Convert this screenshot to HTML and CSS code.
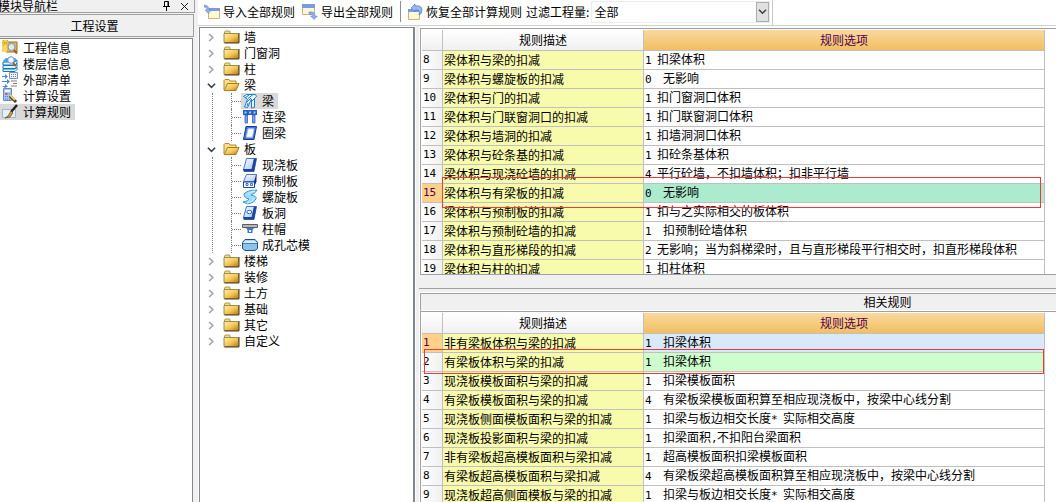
FILE: index.html
```html
<!DOCTYPE html>
<html lang="zh-CN">
<head>
<meta charset="utf-8">
<title>计算规则</title>
<link rel="stylesheet" href="styles.css">
</head>
<body>
<svg class="defs" aria-hidden="true">
  <defs>
    <linearGradient id="gold" x1="0" y1="0" x2="1" y2="1"><stop offset="0" stop-color="#fff0a8"/><stop offset=".55" stop-color="#f2c552"/><stop offset="1" stop-color="#b8780c"/></linearGradient>
    <linearGradient id="blue" x1="0" y1="0" x2="1" y2="1"><stop offset="0" stop-color="#ffffff"/><stop offset="1" stop-color="#a9c8f2"/></linearGradient>
    <symbol id="folder" viewBox="0 0 16 14"><path d="M1 3V2l1-1h4l1 2" fill="#f3dc8c" stroke="#a89468"/><path d="M.5 3.5h14.500v9H.5z" fill="url(#gold)" stroke="#a08a50"/><path d="M15.500 3v10H1" fill="none" stroke="#4a3820"/></symbol>
    <symbol id="folder-open" viewBox="0 0 16 14"><path d="M.5 12V2.500l1-1h4l1 1.500h6v3" fill="#f8df88" stroke="#b18a32"/><path d="M.8 12.500L4 5.500h11.500l-3 7z" fill="url(#gold)" stroke="#a77c22"/></symbol>
    <symbol id="right" viewBox="0 0 8 10"><path d="M1.500 1l4 4-4 4" fill="none" stroke="#a0a0a0" stroke-width="1.600"/></symbol>
    <symbol id="down" viewBox="0 0 10 8"><path d="M1 2l4 4 4-4" fill="none" stroke="#404040" stroke-width="1.800"/></symbol>
    <symbol id="beam" viewBox="0 0 16 16"><path d="M1.500 3.500l3-2h9l1 2-2 2v9l-3 .5V6l-4 8.500-3-.5 3-8z" fill="#e5f4ff" stroke="#2380cf"/><path d="M3 5l4-3M6 5.500l5-4M5 9l4-4M5 13l1-3M10 8l3-3" stroke="#2380cf" fill="none"/></symbol>
    <symbol id="link-beam" viewBox="0 0 16 16"><path d="M1 1h14v5H1z" fill="#2a5ccc"/><path d="M2.500 2.500h2v2h-2zM7 2.500h2v2H7zM11.500 2.500h2v2h-2z" fill="#a9c8fa"/><path d="M3 6h2.500v8H3zM10.500 6H13v8h-2.500z" fill="#79a6e8" stroke="#244fa8" stroke-width=".7"/></symbol>
    <symbol id="ring-beam" viewBox="0 0 16 16"><path d="M4 1.500h10.500l-2.500 13H1.500z" fill="#3f74d4" stroke="#183d98"/><path d="M6 3.800h6l-1.600 8.400H4.300z" fill="#fff" stroke="#a6c5f4"/></symbol>
    <symbol id="slab" viewBox="0 0 16 16"><path d="M4.500 1.500h8l-2.500 11H1.500z" fill="url(#blue)" stroke="#3d73ce"/><path d="M12.500 1.500h2l-2.500 13H2l-.5-2H10z" fill="#1b449f" stroke="#173c91" stroke-width=".7"/></symbol>
    <symbol id="precast" viewBox="0 0 16 16"><path d="M4.500 1.500h10l-2 7h-11z" fill="url(#blue)" stroke="#4f78c4"/><path d="M14.500 1.500v7l-2.500 6V9z" fill="#142e86"/><path d="M1.500 9h11v5.500h-11z" fill="#fff" stroke="#1c489f"/><path d="M4 10.500h2v2H4zM8.500 10.500h2v2h-2z" fill="#fff" stroke="#3472d0"/></symbol>
    <symbol id="spiral" viewBox="0 0 16 16"><path d="M2 5q3-4 13-4-1 3-6 5 6 1 5 4-2 4-8 5l-5-2q6-1 6-3-5-1-5-5z" fill="#9edcff" stroke="#3a98da"/><path d="M13 2Q6 3 6 6M12 9q-1 4-7 5" fill="none" stroke="#d8f2ff"/></symbol>
    <symbol id="slab-hole" viewBox="0 0 16 16"><use href="#slab"/><ellipse cx="7.300" cy="7" rx="2.500" ry="1.700" fill="#fff" stroke="#2967ce"/></symbol>
    <symbol id="cap" viewBox="0 0 16 16"><path d="M.5 3.500h15v3H.5z" fill="#b7b7b7" stroke="#5d5d5d"/><path d="M4 7h8l-1.500 2v3h-5V9z" fill="#3c74d0"/><path d="M7 9h2v2H7z" fill="#fff"/></symbol>
    <symbol id="core" viewBox="0 0 16 16"><path d="M3 2.500h10l2.500 3v6l-2.500 2H3l-2.500-2v-6z" fill="#8dc3eb" stroke="#1c4e90"/><path d="M3 3.500h10l2 2.500H1z" fill="#d4ecfc"/><path d="M1 6.500h14" stroke="#4a83b8"/></symbol>
    <symbol id="info" viewBox="0 0 16 16"><path d="M5 2h10v10H4z" fill="#e6b655" stroke="#9a6d20"/><path d="M0 0h6v7H5v5H0z" fill="#f8d85c"/><path d="M1 0l5 6M6 0L1 6M0 3h7" stroke="#d5a72b"/><circle cx="9.500" cy="7" r="3.500" fill="#dceafb" stroke="#7894c0"/><path d="M12 10l3 3.500" stroke="#a65a22" stroke-width="2"/></symbol>
    <symbol id="floor" viewBox="0 0 16 16"><path d="M1 6h12l2-2v3l-2 2H1zM1 9.500h12l2-2v3l-2 2H1zM1 13h12l2-2v2.500L13 15.500H1z" fill="#e5f5ff" stroke="#1777bd"/><path d="M1 5l3-3h9l2 2-2 2H1z" fill="#47a0dc"/><circle cx="9" cy="4" r="3.300" fill="#eff6ff" stroke="#7390b8"/><path d="M11 7l3 3" stroke="#a06030" stroke-width="2"/></symbol>
    <symbol id="outer" viewBox="0 0 16 16"><path d="M7.500.5h8v6h-8z" fill="#e9f0fa" stroke="#7c91b5"/><path d="M9 2.500h5M9 4.500h5" stroke="#7089b0" stroke-dasharray="1 1"/><path d="M0 4h3V2l3 2.500L3 7V5H0zM0 9h5V7l3 2.500L5 12v-2H0zM0 14h3v-2l3 2.500L3 16z" fill="#4f83d8"/><path d="M9 9h6M11 11.500h4M9 14h6" stroke="#7a7a7a"/></symbol>
    <symbol id="calc" viewBox="0 0 16 16"><path d="M1.500.5h8v12h-8z" fill="#a7c9f5" stroke="#6488c8"/><path d="M3 2h5v2H3z" fill="#f6faff"/><path d="M3 6h5M3 8.500h5M3 11h5" stroke="#4777c4" stroke-dasharray="1 1"/><path d="M3 5h2v2H3z" fill="#ec5360"/><path d="M8 8l6 6" stroke="#4e3a25" stroke-width="3"/><path d="M8 7l5 5" stroke="#f4c957" stroke-width="2"/></symbol>
    <symbol id="rule" viewBox="0 0 16 16"><path d="M.5 5.500h13v8H.5z" fill="#e8f0fa" stroke="#a5b4c8"/><path d="M15 1L9 8" stroke="#222" stroke-width="2.500"/><path d="M9 7l2 2-3 4-5 1 3-2z" fill="#c8a338" stroke="#584518" stroke-width=".7"/></symbol>
    <symbol id="import" viewBox="0 0 16 16"><path d="M4.500 4.500h11v10h-11z" fill="#fff8d5" stroke="#c6b67e"/><path d="M5 4h11v3H5z" fill="#779ce2"/><path d="M0 1q5 0 5 5h2L4.500 9.500 1 6h2Q3 3 0 3z" fill="#8fb0ee" stroke="#5a7cc0" stroke-width=".5"/></symbol>
    <symbol id="export" viewBox="0 0 16 16"><path d="M.5.5h12v10H.5z" fill="#fff8d5" stroke="#c6b67e"/><path d="M0 0h13v4H0z" fill="#779ce2"/><path d="M7 8q6-1 6 4h2.500L12 15.500 8.500 12H11q0-2-4-2z" fill="#8fb0ee" stroke="#5a7cc0" stroke-width=".5"/></symbol>
    <symbol id="restore" viewBox="0 0 16 16"><path d="M1.500 5.500h11v10h-11z" fill="#fff8d5" stroke="#c6b67e"/><path d="M1 5h11v3H1z" fill="#779ce2"/><path d="M4 4l4-4v2q7-1 7 4 0 4-3 5 2-6-4-5v2z" fill="#9ab9ee" stroke="#5279b8" stroke-width=".7"/></symbol>
  </defs>
</svg>
<div class="app">
  <aside class="side">
    <div class="side-title"><span class="side-name">模块导航栏</span>
      <button class="tool" aria-label="固定"><svg width="9" height="10" viewBox="0 0 9 10"><path d="M2.500 5V.5h4V5M1 5.500h7M4.500 5v5M6 1v4" fill="none" stroke="#000"/></svg></button>
      <button class="tool" aria-label="关闭"><svg width="9" height="9" viewBox="0 0 9 9"><path d="M1 1l7 7M8 1L1 8" stroke="#222"/></svg></button>
    </div>
    <button class="section">工程设置</button>
    <nav class="nav">
      <a href="#"><svg><use href="#info"/></svg>工程信息</a>
      <a href="#"><svg><use href="#floor"/></svg>楼层信息</a>
      <a href="#"><svg><use href="#outer"/></svg>外部清单</a>
      <a href="#"><svg><use href="#calc"/></svg>计算设置</a>
      <a href="#" class="current"><svg><use href="#rule"/></svg>计算规则</a>
    </nav>
  </aside>
  <main class="main">
    <div class="bar-row">
      <div class="toolbar">
        <button class="action"><svg><use href="#import"/></svg>导入全部规则</button>
        <button class="action"><svg><use href="#export"/></svg>导出全部规则</button>
        <span class="sep"></span>
        <button class="action"><svg><use href="#restore"/></svg>恢复全部计算规则</button>
        <label for="filter">过滤工程量:</label>
        <span class="combo"><select id="filter"><option>全部</option></select><span class="drop"><svg><use href="#down"/></svg></span></span>
      </div>
    </div>
    <div class="work">
      <div class="tree-pane">
        <ul class="tree">
          <li><button class="node"><svg class="arrow"><use href="#right"/></svg><svg class="dir"><use href="#folder"/></svg>墙</button></li>
          <li><button class="node"><svg class="arrow"><use href="#right"/></svg><svg class="dir"><use href="#folder"/></svg>门窗洞</button></li>
          <li><button class="node"><svg class="arrow"><use href="#right"/></svg><svg class="dir"><use href="#folder"/></svg>柱</button></li>
          <li><button class="node"><svg class="arrow"><use href="#down"/></svg><svg class="dir"><use href="#folder-open"/></svg>梁</button>
            <ul class="branch">
              <li><button class="leaf picked"><svg><use href="#beam"/></svg>梁</button></li>
              <li><button class="leaf"><svg><use href="#link-beam"/></svg>连梁</button></li>
              <li><button class="leaf"><svg><use href="#ring-beam"/></svg>圈梁</button></li>
            </ul></li>
          <li><button class="node"><svg class="arrow"><use href="#down"/></svg><svg class="dir"><use href="#folder-open"/></svg>板</button>
            <ul class="branch">
              <li><button class="leaf"><svg><use href="#slab"/></svg>现浇板</button></li>
              <li><button class="leaf"><svg><use href="#precast"/></svg>预制板</button></li>
              <li><button class="leaf"><svg><use href="#spiral"/></svg>螺旋板</button></li>
              <li><button class="leaf"><svg><use href="#slab-hole"/></svg>板洞</button></li>
              <li><button class="leaf"><svg><use href="#cap"/></svg>柱帽</button></li>
              <li><button class="leaf"><svg><use href="#core"/></svg>成孔芯模</button></li>
            </ul></li>
          <li><button class="node"><svg class="arrow"><use href="#right"/></svg><svg class="dir"><use href="#folder"/></svg>楼梯</button></li>
          <li><button class="node"><svg class="arrow"><use href="#right"/></svg><svg class="dir"><use href="#folder"/></svg>装修</button></li>
          <li><button class="node"><svg class="arrow"><use href="#right"/></svg><svg class="dir"><use href="#folder"/></svg>土方</button></li>
          <li><button class="node"><svg class="arrow"><use href="#right"/></svg><svg class="dir"><use href="#folder"/></svg>基础</button></li>
          <li><button class="node"><svg class="arrow"><use href="#right"/></svg><svg class="dir"><use href="#folder"/></svg>其它</button></li>
          <li><button class="node"><svg class="arrow"><use href="#right"/></svg><svg class="dir"><use href="#folder"/></svg>自定义</button></li>
        </ul>
      </div>
      <div class="tables">
        <section class="pane upper">
          <table>
            <colgroup><col class="c-num"><col class="c-desc"><col></colgroup>
            <thead><tr><th></th><th>规则描述</th><th class="active">规则选项</th></tr></thead>
            <tbody>
              <tr><th>8</th><td>梁体积与梁的扣减</td><td><i>1</i>扣梁体积</td></tr>
              <tr><th>9</th><td>梁体积与螺旋板的扣减</td><td><i class="wide">0</i>无影响</td></tr>
              <tr><th>10</th><td>梁体积与门的扣减</td><td><i>1</i>扣门窗洞口体积</td></tr>
              <tr><th>11</th><td>梁体积与门联窗洞口的扣减</td><td><i>1</i>扣门联窗洞口体积</td></tr>
              <tr><th>12</th><td>梁体积与墙洞的扣减</td><td><i>1</i>扣墙洞洞口体积</td></tr>
              <tr><th>13</th><td>梁体积与砼条基的扣减</td><td><i>1</i>扣砼条基体积</td></tr>
              <tr><th>14</th><td>梁体积与现浇砼墙的扣减</td><td><i>4</i>平行砼墙，不扣墙体积；扣非平行墙</td></tr>
              <tr class="green"><th class="on">15</th><td>梁体积与有梁板的扣减</td><td><i class="wide">0</i>无影响</td></tr>
              <tr><th>16</th><td>梁体积与预制板的扣减</td><td><i>1</i>扣与之实际相交的板体积</td></tr>
              <tr><th>17</th><td>梁体积与预制砼墙的扣减</td><td><i class="wide">1</i>扣预制砼墙体积</td></tr>
              <tr><th>18</th><td>梁体积与直形梯段的扣减</td><td><i>2</i>无影响；当为斜梯梁时，且与直形梯段平行相交时，扣直形梯段体积</td></tr>
              <tr><th>19</th><td>梁体积与柱的扣减</td><td><i>1</i>扣柱体积</td></tr>
            </tbody>
          </table>
          <div class="mark mark-upper"></div>
        </section>
        <div class="splitter"></div>
        <h2 class="caption">相关规则</h2>
        <section class="pane lower">
          <table>
            <colgroup><col class="c-num"><col class="c-desc"><col></colgroup>
            <thead><tr><th></th><th>规则描述</th><th class="active">规则选项</th></tr></thead>
            <tbody>
              <tr class="sky"><th class="on">1</th><td>非有梁板体积与梁的扣减</td><td><i class="wide">1</i>扣梁体积</td></tr>
              <tr class="mint"><th>2</th><td>有梁板体积与梁的扣减</td><td><i class="wide">1</i>扣梁体积</td></tr>
              <tr><th>3</th><td>现浇板模板面积与梁的扣减</td><td><i class="wide">1</i>扣梁模板面积</td></tr>
              <tr><th>4</th><td>有梁板模板面积与梁的扣减</td><td><i class="wide">4</i>有梁板梁模板面积算至相应现浇板中，按梁中心线分割</td></tr>
              <tr><th>5</th><td>现浇板侧面模板面积与梁的扣减</td><td><i class="wide">1</i>扣梁与板边相交长度<i>*</i>实际相交高度</td></tr>
              <tr><th>6</th><td>现浇板投影面积与梁的扣减</td><td><i class="wide">1</i>扣梁面积<i class="half">,</i>不扣阳台梁面积</td></tr>
              <tr><th>7</th><td>非有梁板超高模板面积与梁扣减</td><td><i class="wide">1</i>超高模板面积扣梁模板面积</td></tr>
              <tr><th>8</th><td>有梁板超高模板面积与梁扣减</td><td><i class="wide">4</i>有梁板梁超高模板面积算至相应现浇板中，按梁中心线分割</td></tr>
              <tr><th>9</th><td>现浇板超高侧面模板与梁的扣减</td><td><i class="wide">1</i>扣梁与板边相交长度<i>*</i>实际相交高度</td></tr>
            </tbody>
          </table>
          <div class="mark mark-lower"></div>
        </section>
      </div>
    </div>
  </main>
</div>
</body>
</html>
```

FILE: styles.css
```css
* { box-sizing: border-box; }
body {
  margin: 0;
  height: 100vh;
  overflow: hidden;
  background: #f0f0f0;
  color: #000;
  font: 12px/16px "Noto Sans CJK SC", sans-serif;
}
button, select {
  font: inherit;
  color: inherit;
  border: 0;
  margin: 0;
  padding: 0;
  background: none;
  text-align: left;
}
svg { display: block; flex: none; }
.defs { position: absolute; width: 0; height: 0; }
ul { list-style: none; margin: 0; padding: 0; }
.app { display: flex; height: 100%; }

/* module navigation */
.side {
  flex: 0 0 195px;
  display: flex;
  flex-direction: column;
}
.side-title {
  display: flex;
  align-items: center;
  gap: 8px;
  height: 13px;
  padding-right: 4px;
  border-right: 1px solid #a0a0a0;
  border-bottom: 1px solid #a0a0a0;
}
.side-name { flex: 1; margin-left: -2px; line-height: 14px; white-space: nowrap; }
.tool { width: 10px; }
.section {
  height: 23px;
  margin: 1px 1px 1px 0;
  padding-right: 4px;
  border: 1px solid #a0a0a0;
  border-left: 0;
  text-align: center;
}
.nav {
  flex: 1;
  margin-right: 2px;
  padding-top: 1px;
  background: #fff;
  border-top: 1px solid #828790;
  border-right: 1px solid #828790;
}
.nav a {
  display: flex;
  align-items: center;
  gap: 5px;
  width: 75px;
  height: 16px;
  padding-left: 2px;
  color: #000;
  text-decoration: none;
  white-space: nowrap;
}
.nav svg { width: 16px; height: 16px; }
.nav .current { background: #d9d9d9; }

/* toolbar */
.main {
  flex: 1;
  min-width: 0;
  display: flex;
  flex-direction: column;
  margin-left: 3px;
  background: #fff;
}
.bar-row { height: 26px; border-bottom: 1px solid #d0d0d0; }
.toolbar {
  display: flex;
  align-items: center;
  width: 575px;
  height: 25px;
  padding: 0 0 2px 6px;
  border-right: 1px solid #c8c8c8;
  white-space: nowrap;
}
.action { display: flex; align-items: center; gap: 3px; margin-right: 7px; }
.action svg { width: 16px; height: 16px; }
.sep { width: 1px; height: 21px; margin-right: 6px; background: #909090; }
.sep + .action { margin-right: 4px; }
.combo {
  position: relative;
  flex: 1;
  height: 22px;
  margin: 0 2px 0 2px;
  border: 1px solid #ececec;
}
.combo select {
  appearance: none;
  width: 100%;
  height: 20px;
  padding-left: 2px;
}
.drop {
  position: absolute;
  top: 0;
  right: 0;
  display: grid;
  place-items: center;
  width: 13px;
  height: 20px;
  background: #e1e1e1;
  border: 1px solid #adadad;
  pointer-events: none;
}
.drop svg { width: 9px; height: 7px; }

/* component tree */
.work { flex: 1; min-height: 0; display: flex; }
.tree-pane {
  flex: 0 0 216px;
  margin: 1px 1px 0 1px;
  padding-top: 1px;
  border: 1px solid #828790;
  border-right-width: 2px;
  border-bottom: 0;
}
.node, .leaf { display: flex; align-items: center; height: 16px; white-space: nowrap; }
.node { padding-left: 7px; }
.arrow { width: 9px; height: 9px; margin-right: 7px; }
.dir { width: 17px; height: 14px; margin-right: 4px; }
.branch {
  margin-left: 12px;
  padding-left: 18px;
  border-left: 1px dotted #808080;
}
.branch li { display: flex; align-items: center; border-left: 1px dotted #808080; }
.branch li::before { content: ""; width: 9px; border-top: 1px dotted #808080; }
.leaf { gap: 4px; padding: 0 4px 0 1px; }
.leaf svg { width: 16px; height: 16px; }
.picked { background: #d9d9d9; }

/* rule tables */
.tables {
  flex: 1;
  min-width: 0;
  display: flex;
  flex-direction: column;
  padding-top: 2px;
  border-left: 3px solid #f0f0f0;
}
.pane {
  position: relative;
  margin-left: 1px;
  padding: 1px 11px 0 1px;
  border-top: 1px solid #a0a0a0;
  border-left: 1px solid #a0a0a0;
  overflow: hidden;
}
.upper { flex: 0 0 247px; border-bottom: 1px solid #a0a0a8; }
.lower { flex: 1; min-height: 0; }
.splitter {
  flex: 0 0 18px;
  background: linear-gradient(#f0f0f0 13px, #a0a0a0 13px, #a0a0a0 14px, #f0f0f0 14px, #f0f0f0 17px, #fff 17px);
}
.caption {
  flex: 0 0 18px;
  margin: 0 0 0 1px;
  padding-left: 298px;
  background: #f0f0f0;
  border: solid #a0a0a0;
  border-width: 1px 0 0 1px;
  border-bottom: 1px solid #fff;
  font: inherit;
  text-align: center;
}
table {
  width: 100%;
  table-layout: fixed;
  border-collapse: separate;
  border-spacing: 0;
}
.c-num { width: 21px; }
.c-desc { width: 201px; }
th, td {
  height: 19px;
  padding: 0 0 0 1px;
  border-right: 1px solid #c0c0c0;
  border-bottom: 1px solid #c0c0c0;
  font-weight: normal;
  text-align: left;
  white-space: nowrap;
}
tbody th { background: linear-gradient(90deg, #fff, #f0f0f0); }
tbody th, i { font-family: "DejaVu Sans Mono", monospace; font-size: 11px; font-style: normal; }
thead th {
  height: 21px;
  padding: 0;
  background: linear-gradient(#fff, #f0f0f0);
  text-align: center;
}
thead .active { background: linear-gradient(#fad9a0, #f0bf60); color: #500050; }
td:nth-child(2) { background: #f8faac; }
tbody .on { background: #ffd08a; color: #500050; }
.green td:last-child { background: #adebcf; }
.sky td:last-child { background: #d8eaf9; }
.mint td:last-child { background: #ccffcc; }
i { display: inline-block; width: 12px; }
.wide { width: 18px; }
.half { width: 6px; }
.mark { position: absolute; border: 1px solid #f03838; pointer-events: none; }
.mark-upper { top: 148px; left: 21px; right: 15px; height: 31px; }
.mark-lower { top: 37px; left: 3px; right: 12px; height: 25px; }
```
